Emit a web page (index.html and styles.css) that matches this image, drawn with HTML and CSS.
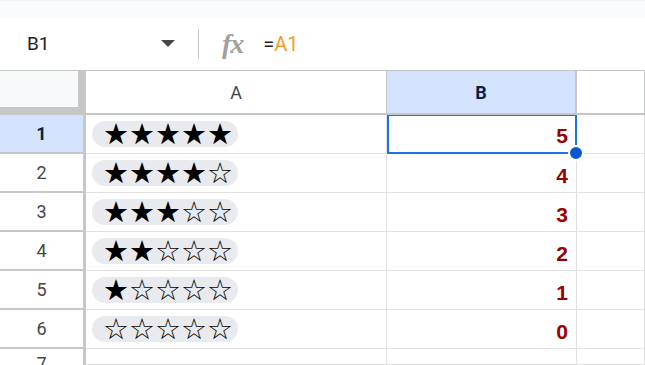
FILE: index.html
```html
<!DOCTYPE html>
<html lang="en">
<head>
    <meta charset="UTF-8">
    <title>Star ratings - Sheet</title>
    <link rel="stylesheet" href="styles.css">
</head>
<body>
    <div class="toolbar"></div>

    <div class="formula-bar">
        <div class="name-box">
            <span class="cell-ref">B1</span>
            <span class="caret"></span>
        </div>
        <div class="divider"></div>
        <span class="fx">fx</span>
        <span class="formula">=<span class="ref">A1</span></span>
    </div>

    <div class="grid">
        <div class="corner"></div>
        <div class="col-head">A</div>
        <div class="col-head active">B</div>
        <div class="col-head"></div>

        <div class="row-head active">1</div>
        <div class="cell"><span class="pill">★★★★★</span></div>
        <div class="cell num selected">5<span class="handle"></span></div>
        <div class="cell"></div>

        <div class="row-head">2</div>
        <div class="cell"><span class="pill">★★★★☆</span></div>
        <div class="cell num">4</div>
        <div class="cell"></div>

        <div class="row-head">3</div>
        <div class="cell"><span class="pill">★★★☆☆</span></div>
        <div class="cell num">3</div>
        <div class="cell"></div>

        <div class="row-head">4</div>
        <div class="cell"><span class="pill">★★☆☆☆</span></div>
        <div class="cell num">2</div>
        <div class="cell"></div>

        <div class="row-head">5</div>
        <div class="cell"><span class="pill">★☆☆☆☆</span></div>
        <div class="cell num">1</div>
        <div class="cell"></div>

        <div class="row-head">6</div>
        <div class="cell"><span class="pill">☆☆☆☆☆</span></div>
        <div class="cell num">0</div>
        <div class="cell"></div>

        <div class="row-head last">7</div>
        <div class="cell"></div>
        <div class="cell num"></div>
        <div class="cell"></div>
    </div>
</body>
</html>
```

FILE: styles.css
```css
body {
    margin: 0;
    padding: 0;
    background-color: #ffffff;
    font-family: "Liberation Sans", Arial, sans-serif;
    color: #1f1f1f;
    overflow: hidden;
    height: 365px;
}

.toolbar {
    height: 17px;
    background-color: #f9fbfd;
    border-top: 1px solid #f1f3f4;
    box-sizing: border-box;
}

/* formula bar */
.formula-bar {
    height: 54px;
    display: flex;
    align-items: center;
    border-bottom: 1px solid #c4c7c5;
    box-sizing: border-box;
}

.name-box {
    width: 198px;
    display: flex;
    align-items: center;
    padding-left: 27px;
    padding-right: 23px;
    box-sizing: border-box;
}

.cell-ref {
    flex: 1;
    font-family: Roboto, "Liberation Sans", sans-serif;
    font-size: 19px;
}

.caret {
    width: 0;
    height: 0;
    border-left: 7px solid transparent;
    border-right: 7px solid transparent;
    border-top: 7px solid #444746;
}

.divider {
    width: 1px;
    height: 30px;
    background-color: #c4c7c5;
}

.fx {
    margin-left: 23px;
    font-family: "Liberation Serif", serif;
    font-style: italic;
    font-weight: bold;
    font-size: 28px;
    color: #a0a0a0;
    letter-spacing: -1px;
}

.formula {
    margin-left: 20px;
    font-family: Roboto, "Liberation Sans", sans-serif;
    font-size: 20px;
}

.ref {
    color: #f29b2a;
}

/* sheet grid */
.grid {
    display: grid;
    grid-template-columns: 86px 301px 190px 1fr;
    grid-template-rows: 44px repeat(6, 39px) 16px;
}

.corner {
    background-color: #f8f9fa;
    border-right: 8px solid #c7c7c7;
    border-bottom: 8px solid #c7c7c7;
}

.col-head {
    display: flex;
    align-items: center;
    justify-content: center;
    font-family: Roboto, "Liberation Sans", sans-serif;
    font-size: 18px;
    color: #444746;
    border-right: 1px solid #c4c7c5;
    border-bottom: 2px solid #c4c7c5;
}

.col-head:last-child {
    border-right: none;
}

.col-head.active {
    background-color: #d3e3fd;
    color: #0b1f45;
    font-weight: bold;
    border-right-width: 2px;
}

.row-head {
    display: flex;
    align-items: center;
    justify-content: center;
    font-family: Roboto, "Liberation Sans", sans-serif;
    font-size: 18px;
    color: #444746;
    border-right: 3px solid #c7c7c7;
    border-bottom: 2px solid #c7c7c7;
}

.row-head.last {
    align-items: flex-start;
    padding-top: 6px;
    line-height: 1;
    border-bottom: none;
}

.row-head.active {
    background-color: #d3e3fd;
    color: #0b1f45;
    font-weight: bold;
}

.cell {
    position: relative;
    display: flex;
    align-items: center;
    border-right: 1px solid #e1e1e1;
    border-bottom: 1px solid #e1e1e1;
}

.pill {
    margin-left: 6px;
    height: 26px;
    width: 146px;
    box-sizing: border-box;
    padding-left: 11px;
    border-radius: 13px;
    background-color: #e8eaed;
    font-family: "DejaVu Sans", sans-serif;
    font-size: 29px;
    line-height: 27px;
    color: #000000;
    white-space: nowrap;
}

.num {
    justify-content: flex-end;
    align-items: flex-end;
    padding-right: 8px;
    padding-bottom: 6px;
    font-size: 21px;
    line-height: 1;
    font-weight: bold;
    color: #990000;
}

.num.selected {
    border: 2px solid #1a73e8;
    border-top-width: 1px;
    padding-right: 7px;
}

.handle {
    position: absolute;
    right: -9px;
    bottom: -9px;
    width: 12px;
    height: 12px;
    border-radius: 50%;
    background-color: #0b57d0;
    border: 2px solid #ffffff;
    z-index: 2;
}
```
